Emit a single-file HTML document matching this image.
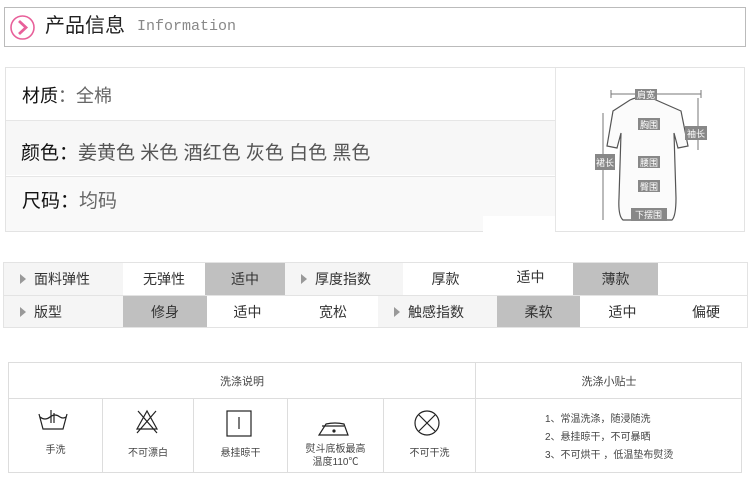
<!DOCTYPE html>
<html><head><meta charset="utf-8"><style>
*{margin:0;padding:0;box-sizing:border-box}
body{width:750px;height:481px;background:#fff;position:relative;overflow:hidden;font-family:"Liberation Sans","Noto Sans CJK SC",sans-serif;color:#333}
.a{position:absolute}
.c{position:absolute;display:flex;align-items:center;justify-content:center;font-size:14px;color:#333}
.g{background:#c0c0c0}
.l{background:#f5f5f5;justify-content:flex-start;padding-left:16px}
.l:before{content:"";border-left:6px solid #999;border-top:5px solid transparent;border-bottom:5px solid transparent;margin-right:8px}
.s{font-size:10px;color:#444}
</style></head><body>
<div class="a" style="left:4px;top:7px;width:742px;height:40px;border:1px solid #bbb"></div>
<svg class="a" style="left:9px;top:14px" width="27" height="27"><circle cx="13.5" cy="13.5" r="11.5" fill="none" stroke="#e8609a" stroke-width="1.6"/><path d="M10 7 L17 13.5 L10 20" fill="none" stroke="#e8609a" stroke-width="2.8"/></svg>
<div class="a" style="left:45px;top:14px;font-size:20px;color:#222;line-height:24px">产品信息</div>
<div class="a" style="left:137px;top:18px;font-size:15px;color:#888;font-family:'Liberation Mono',monospace;line-height:18px">Information</div>

<div class="a" style="left:5px;top:67px;width:740px;height:165px;border:1px solid #e3e3e3"></div>
<div class="a" style="left:6px;top:120px;width:549px;height:55px;background:#f7f7f7;border-top:1px solid #e6e6e6"></div>
<div class="a" style="left:6px;top:176px;width:549px;height:55px;background:#f9f9f9;border-top:1px solid #e6e6e6"></div>
<div class="a" style="left:555px;top:68px;width:1px;height:163px;background:#e6e6e6"></div>
<div class="a" style="left:483px;top:216px;width:72px;height:16px;background:#fff"></div>
<div class="a" style="left:22px;top:84px;font-size:18px;color:#111;line-height:24px">材质<span style="color:#666">：全棉</span></div>
<div class="a" style="left:21px;top:142px;font-size:19px;color:#111;line-height:24px">颜色：<span style="color:#555">姜黄色 米色 酒红色 灰色 白色 黑色</span></div>
<div class="a" style="left:22px;top:190px;font-size:19px;color:#111;line-height:24px">尺码：<span style="color:#666">均码</span></div>

<svg class="a" style="left:593px;top:88px" width="125" height="136" font-size="9" font-family="Noto Sans CJK SC">
<path d="M37 12 Q50 6 63 12 L88 23 L95 58 L85 60 L81 45 L83 110 Q83 128 79 132 L30 132 Q25 128 26 110 L28 45 L24 60 L14 58 L20 23 Z" fill="#fbfbfb" stroke="#555" stroke-width="1.2"/>
<path d="M18 6 L108 6 M18 2 V10 M108 2 V10 M10 25 V132 M105 10 V62" stroke="#777"/>
<g fill="#888"><rect x="42" y="1" width="22" height="11"/><rect x="45" y="30" width="22" height="12"/><rect x="92" y="38" width="22" height="14"/><rect x="2" y="66" width="20" height="16"/><rect x="45" y="68" width="22" height="12"/><rect x="45" y="92" width="22" height="12"/><rect x="38" y="120" width="36" height="13"/></g>
<g fill="#fff"><text x="44" y="10">肩宽</text><text x="47" y="40">胸围</text><text x="94" y="49">袖长</text><text x="3" y="78">裙长</text><text x="47" y="78">腰围</text><text x="47" y="102">臀围</text><text x="42" y="130">下摆围</text></g>
</svg>

<div class="a" style="left:3px;top:262px;width:745px;height:66px;border:1px solid #e3e3e3"></div>
<div class="c l" style="left:4px;top:263px;width:119px;height:32px">面料弹性</div>
<div class="c" style="left:123px;top:263px;width:82px;height:32px">无弹性</div>
<div class="c g" style="left:205px;top:263px;width:80px;height:32px">适中</div>
<div class="c l" style="left:285px;top:263px;width:118px;height:32px">厚度指数</div>
<div class="c" style="left:403px;top:263px;width:85px;height:32px">厚款</div>
<div class="c" style="left:488px;top:263px;width:85px;height:28px">适中</div>
<div class="c g" style="left:573px;top:263px;width:85px;height:32px">薄款</div>
<div class="a" style="left:4px;top:295px;width:743px;height:1px;background:#e3e3e3"></div>
<div class="c l" style="left:4px;top:296px;width:119px;height:31px">版型</div>
<div class="c g" style="left:123px;top:296px;width:84px;height:31px">修身</div>
<div class="c" style="left:207px;top:296px;width:81px;height:31px">适中</div>
<div class="c" style="left:288px;top:296px;width:90px;height:31px">宽松</div>
<div class="c l" style="left:378px;top:296px;width:119px;height:31px">触感指数</div>
<div class="c g" style="left:497px;top:296px;width:83px;height:31px">柔软</div>
<div class="c" style="left:580px;top:296px;width:85px;height:31px">适中</div>
<div class="c" style="left:665px;top:296px;width:82px;height:31px">偏硬</div>

<div class="a" style="left:8px;top:362px;width:734px;height:111px;border:1px solid #ddd"></div>
<div class="a" style="left:9px;top:398px;width:733px;height:1px;background:#ddd"></div>
<div class="a" style="left:475px;top:363px;width:1px;height:109px;background:#ddd"></div>
<div class="a" style="left:102px;top:399px;width:1px;height:73px;background:#ddd"></div>
<div class="a" style="left:193px;top:399px;width:1px;height:73px;background:#ddd"></div>
<div class="a" style="left:287px;top:399px;width:1px;height:73px;background:#ddd"></div>
<div class="a" style="left:383px;top:399px;width:1px;height:73px;background:#ddd"></div>
<div class="c s" style="left:9px;top:363px;width:466px;height:35px;font-size:11px">洗涤说明</div>
<div class="c s" style="left:476px;top:363px;width:266px;height:35px;font-size:11px">洗涤小贴士</div>
<svg class="a" style="left:0;top:405px" width="475" height="40" fill="none" stroke="#222" stroke-width="1.2">
<path d="M39 9 L43 24 H63 L67 9 M40 12 Q45 16 50 12 Q55 8 60 12 Q63 14 66 12 M51 5 V18 M54 8 V18"/>
<path d="M137 24 L147 6 L157 24 Z M138 6 L157 28 M156 6 L137 28"/>
<rect x="227" y="6" width="24" height="25"/><path d="M239 12 V24"/>
<path d="M319 30 H348 L344 19 Q335 17 326 19 Z M322 21 H344"/><circle cx="334" cy="26" r="1" fill="#222"/>
<circle cx="427" cy="18" r="12"/><path d="M419 10 L435 26 M435 10 L419 26"/>
</svg>
<div class="c s" style="left:9px;top:441px;width:93px;height:14px">手洗</div>
<div class="c s" style="left:103px;top:444px;width:90px;height:14px">不可漂白</div>
<div class="c s" style="left:194px;top:444px;width:93px;height:14px">悬挂晾干</div>
<div class="c s" style="left:288px;top:442px;width:95px;height:28px;text-align:center;line-height:13px">熨斗底板最高<br>温度110℃</div>
<div class="c s" style="left:384px;top:444px;width:91px;height:14px">不可干洗</div>
<div class="a s" style="left:545px;top:411px;line-height:18px">1、常温洗涤，随浸随洗<br>2、悬挂晾干，不可暴晒<br>3、不可烘干 ，低温垫布熨烫</div>
</body></html>
